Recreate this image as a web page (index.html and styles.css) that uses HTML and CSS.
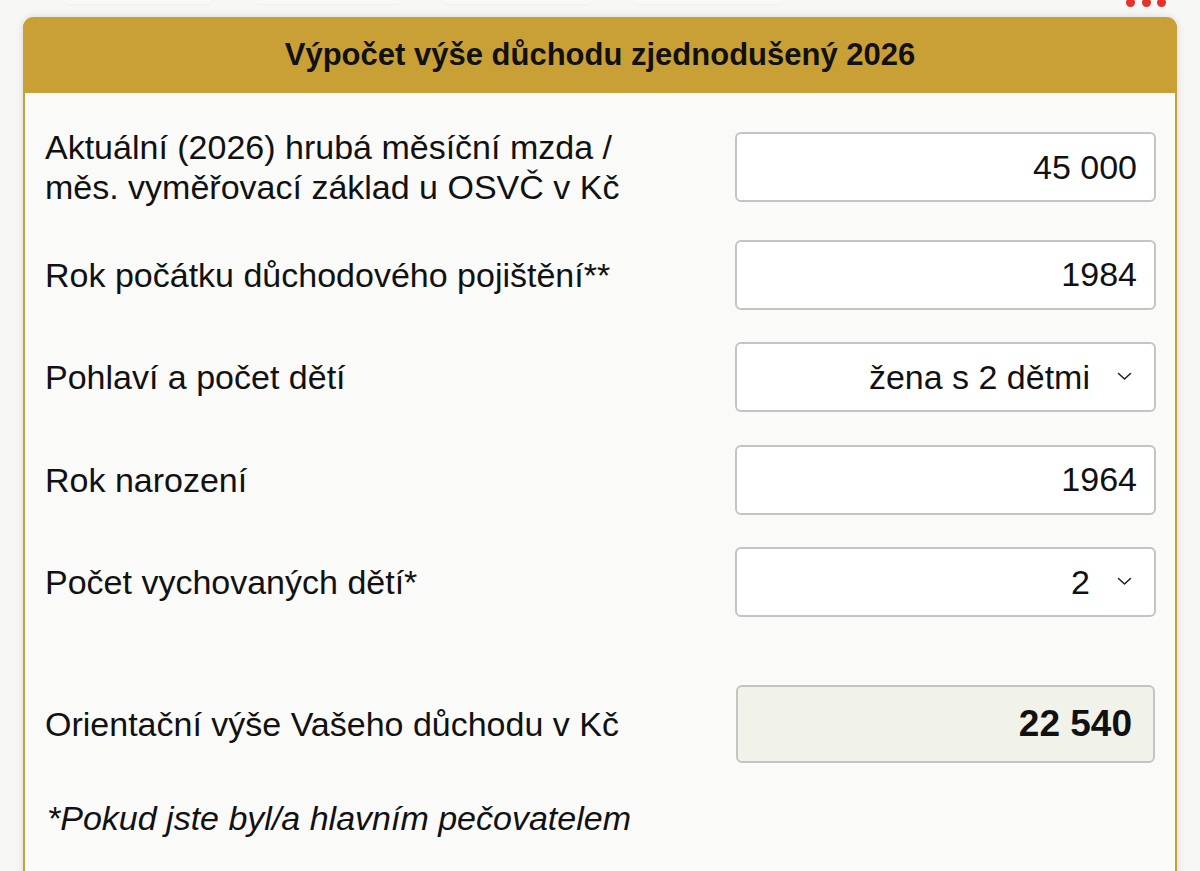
FILE: index.html
```html
<!DOCTYPE html>
<html lang="cs">
<head>
<meta charset="utf-8">
<title>Výpočet výše důchodu zjednodušený 2026</title>
<link rel="stylesheet" href="styles.css">
</head>
<body>
<div class="top-strip">
  <div class="tabs">
    <span class="tab"></span>
    <span class="tab"></span>
    <span class="tab"></span>
    <span class="tab"></span>
  </div>
  <div class="dots" aria-label="menu"><span></span><span></span><span></span></div>
</div>
<section class="card">
  <h1 class="card-title">Výpočet výše důchodu zjednodušený 2026</h1>
  <form class="card-body">
    <div class="row row-tall">
      <label class="label" for="mzda">Aktuální (2026) hrubá měsíční mzda /<br>měs. vyměřovací základ u OSVČ v Kč</label>
      <input class="field" id="mzda" type="text" value="45 000">
    </div>
    <div class="row">
      <label class="label" for="pocatek">Rok počátku důchodového pojištění**</label>
      <input class="field" id="pocatek" type="text" value="1984">
    </div>
    <div class="row">
      <label class="label" for="pohlavi">Pohlaví a počet dětí</label>
      <div class="select-wrap">
        <select class="field select" id="pohlavi">
          <option>žena s 2 dětmi</option>
        </select>
        <svg class="chevron" width="15" height="9" viewBox="0 0 15 9"><path d="M1.5 1.5 L7.5 7 L13.5 1.5" fill="none" stroke="#222" stroke-width="1.6" stroke-linecap="round" stroke-linejoin="round"/></svg>
      </div>
    </div>
    <div class="row">
      <label class="label" for="narozeni">Rok narození</label>
      <input class="field" id="narozeni" type="text" value="1964">
    </div>
    <div class="row">
      <label class="label" for="deti">Počet vychovaných dětí*</label>
      <div class="select-wrap">
        <select class="field select" id="deti">
          <option>2</option>
        </select>
        <svg class="chevron" width="15" height="9" viewBox="0 0 15 9"><path d="M1.5 1.5 L7.5 7 L13.5 1.5" fill="none" stroke="#222" stroke-width="1.6" stroke-linecap="round" stroke-linejoin="round"/></svg>
      </div>
    </div>
    <div class="row row-result">
      <span class="label">Orientační výše Vašeho důchodu v Kč</span>
      <output class="result">22 540</output>
    </div>
    <p class="note">*Pokud jste byl/a hlavním pečovatelem</p>
  </form>
</section>
</body>
</html>
```
FILE: styles.css
```css
html, body {
  margin: 0;
  padding: 0;
}
body {
  background: #f7f7f6;
  font-family: "Liberation Sans", Arial, Helvetica, sans-serif;
  color: #111;
  padding: 0 23px;
  overflow: hidden;
  height: 871px;
  box-sizing: border-box;
}
.top-strip {
  height: 17px;
  display: flex;
  justify-content: space-between;
  align-items: flex-start;
}
.tabs {
  display: flex;
  gap: 40px;
  margin-left: 40px;
}
.tab {
  display: block;
  width: 150px;
  height: 8px;
  margin-top: -4px;
  background: #f9f9f9;
  border-radius: 0 0 6px 6px;
  box-shadow: 0 1px 2px rgba(0, 0, 0, 0.035);
}
.dots {
  display: flex;
  gap: 6.5px;
  margin-right: 11px;
  margin-top: -2px;
}
.dots span {
  display: block;
  width: 9px;
  height: 9px;
  border-radius: 50%;
  background: #e5322b;
}
.card {
  border: 2px solid #c9a035;
  border-top: 0;
  border-bottom: 0;
  border-radius: 11px 11px 0 0;
  background: #fafaf8;
  box-shadow: 0 0 9px rgba(0, 0, 0, 0.13);
  margin: 0;
}
.card-title {
  margin: 0 -2px;
  height: 76px;
  display: flex;
  align-items: center;
  justify-content: center;
  background: #c9a035;
  border-radius: 11px 11px 0 0;
  font-size: 31px;
  font-weight: 700;
  color: #111;
}
.card-body {
  padding: 34px 19px 80px 20px;
  display: flex;
  flex-direction: column;
  gap: 32.5px;
}
.row {
  display: grid;
  grid-template-columns: 1fr 421px;
  align-items: center;
  min-height: 70px;
}
.label {
  font-size: 34px;
  line-height: 40px;
  color: #111;
}
.field {
  box-sizing: border-box;
  width: 421px;
  height: 70px;
  border: 2px solid #c4c4c4;
  border-radius: 6px;
  background: #fff;
  font-family: "Liberation Sans", Arial, Helvetica, sans-serif;
  font-size: 34px;
  color: #111;
  text-align: right;
  padding: 0 17px 0 10px;
  margin: 0;
  outline: none;
}
.select-wrap {
  position: relative;
  width: 421px;
  height: 70px;
}
.select {
  appearance: none;
  -webkit-appearance: none;
  text-align-last: right;
  padding-right: 64px;
}
.chevron {
  position: absolute;
  right: 24px;
  top: 30px;
  pointer-events: none;
}
.row-result {
  margin-top: 35px;
}
.result {
  box-sizing: border-box;
  width: 419px;
  height: 78px;
  margin-left: 1px;
  display: flex;
  align-items: center;
  justify-content: flex-end;
  padding-right: 21px;
  border: 2px solid #c4c4c4;
  border-radius: 6px;
  background: #f1f2e9;
  font-size: 37px;
  font-weight: 700;
  color: #111;
}
.note {
  margin: 3px 0 0 2px;
  font-size: 34px;
  line-height: 40px;
  font-style: italic;
  color: #111;
}
```
